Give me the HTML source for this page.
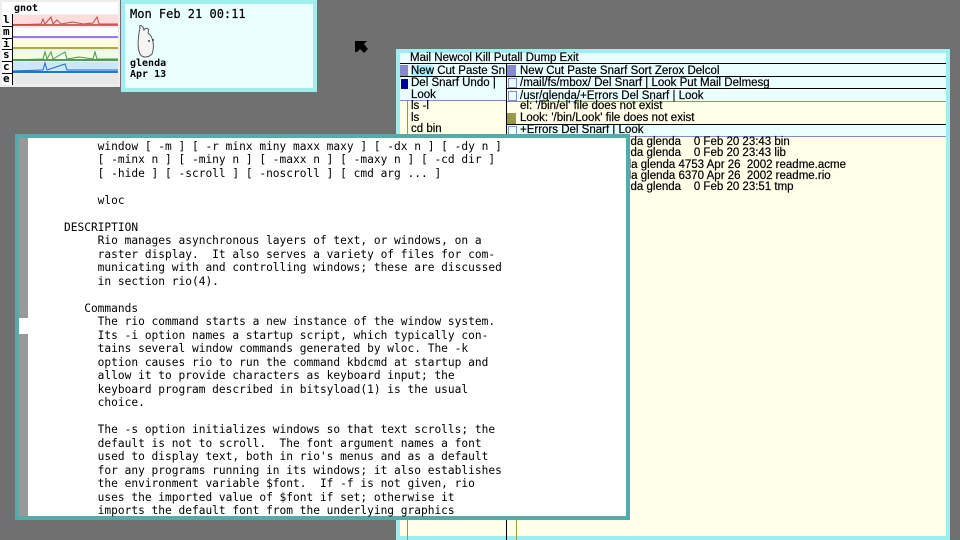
<!DOCTYPE html>
<html><head><style>
*{margin:0;padding:0;box-sizing:border-box}
body{width:960px;height:540px;background:#707070;position:relative;overflow:hidden;font-family:"Liberation Sans",sans-serif}
.a{position:absolute}
.m{font-family:"DejaVu Sans Mono","Liberation Mono",monospace}
.s{font-family:"Liberation Sans",sans-serif;font-size:11.5px;line-height:12px;white-space:pre;color:#000;-webkit-text-stroke:0.2px #000}
pre{font-family:"DejaVu Sans Mono","Liberation Mono",monospace;font-size:11.2px;line-height:13.48px;color:#000}
</style></head><body>

<!-- stats -->
<div class="a" style="left:0;top:0;width:120px;height:87px;background:#eeeeee"></div>
<div class="a" style="left:2px;top:2px;width:116px;height:12px;background:#fff"></div>
<div class="a m" style="left:14px;top:3px;font-size:10px;font-weight:bold">gnot</div>
<div class="a" style="left:2px;top:14px;width:11px;height:71px;background:#fff;border-right:1px solid #000"></div>
<div class="a m" style="left:3px;top:14px;font-size:11px;line-height:11.8px;font-weight:bold;white-space:pre">l
m
i
s
c
e</div>
<div class="a" style="left:2px;top:26px;width:11px;height:1px;background:#000"></div>
<div class="a" style="left:2px;top:38px;width:11px;height:1px;background:#000"></div>
<div class="a" style="left:2px;top:49px;width:11px;height:1px;background:#000"></div>
<div class="a" style="left:2px;top:61px;width:11px;height:1px;background:#000"></div>
<div class="a" style="left:2px;top:73px;width:11px;height:1px;background:#000"></div>
<div class="a" style="left:13px;top:15px;width:105px;height:11px;background:#ffdddd;border-bottom:2px solid #cc6666"></div>
<div class="a" style="left:13px;top:28px;width:105px;height:10px;background:#fff;border-bottom:2px solid #9a7ae6"></div>
<div class="a" style="left:13px;top:39px;width:105px;height:10px;background:#ffffdd;border-bottom:2px solid #aaaa55"></div>
<div class="a" style="left:13px;top:51px;width:105px;height:10px;background:#eeffe6;border-bottom:2px solid #55995a"></div>
<div class="a" style="left:13px;top:62px;width:105px;height:11px;background:#cce8f8;border-bottom:2px solid #2277cc"></div>
<div class="a" style="left:13px;top:74px;width:105px;height:10px;background:#e8e8e8"></div>
<svg class="a" style="left:13px;top:15px" width="105" height="60">
<polyline fill="none" stroke="#cc4444" points="0,10 28,9 30,4 32,9 38,2 40,9 44,5 48,9 60,7 70,9 80,8 84,2 86,9 105,9"/>
<polyline fill="none" stroke="#449944" points="0,45 30,44 32,37 34,44 38,37 40,44 52,37 54,44 66,42 80,44 82,37 84,44 105,44"/>
<polyline fill="none" stroke="#2266cc" points="0,56 30,55 32,48 34,55 52,49 54,55 105,55"/>
</svg>

<!-- clock window -->
<div class="a" style="left:121px;top:0;width:196px;height:92px;background:#eaffff;border:4px solid #9eeeee"></div>
<div class="a m" style="left:130px;top:7px;font-size:12px;-webkit-text-stroke:0.2px #000">Mon Feb 21 00:11</div>
<svg class="a" style="left:134px;top:24px" width="26" height="36"><path d="M6,4 C4,0 9,1 10,6 C12,3 16,4 14,9 C19,12 21,22 18,30 C14,34 8,34 6,30 C3,24 4,12 6,4Z" fill="#f4f4f4" stroke="#555" stroke-width="1"/><circle cx="15" cy="17" r="1" fill="#444"/><circle cx="19" cy="16" r="1" fill="#444"/></svg>
<div class="a m" style="left:130px;top:59px;font-size:10px;line-height:10.5px;font-weight:bold;white-space:pre">glenda
Apr 13</div>

<!-- cursor -->
<svg class="a" style="left:355px;top:41px" width="14" height="13"><path d="M0,0 L12,0 L9,3 L13,8 L9,12 L5,8 L2,11 L0,11Z" fill="#000"/></svg>

<!-- acme -->
<div class="a" style="left:396px;top:49px;width:554px;height:491px;background:#ffffea;border:4px solid #9eeeee"></div>
<div class="a" style="left:400px;top:53px;width:546px;height:11px;background:#eaffff;border-bottom:1px solid #000"></div>
<div class="a s" style="left:410px;top:52px">Mail Newcol Kill Putall Dump Exit</div>
<div class="a" style="left:400px;top:64px;width:546px;height:13px;background:#eaffff;border-bottom:1px solid #000"></div>
<div class="a" style="left:400px;top:65px;width:8px;height:11px;background:#8888cc"></div>
<div class="a" style="left:411px;top:65px;width:22px;height:11px;background:#aaeeff"></div>
<div class="a s" style="left:411px;top:65px">New Cut Paste Sn</div>
<div class="a" style="left:507px;top:65px;width:9px;height:11px;background:#8888cc"></div>
<div class="a s" style="left:520px;top:65px">New Cut Paste Snarf Sort Zerox Delcol</div>
<div class="a" style="left:400px;top:77px;width:106px;height:24px;background:#eaffff;border-bottom:1px solid #8888cc"></div>
<div class="a" style="left:401px;top:79px;width:7px;height:10px;background:#000099"></div>
<div class="a s" style="left:411px;top:77px">Del Snarf Undo |
Look</div>
<div class="a s" style="left:411px;top:101px;line-height:11.5px">ls -l
ls
cd bin</div>
<div class="a" style="left:407px;top:101px;width:1px;height:439px;background:#99994c"></div>
<div class="a" style="left:506px;top:64px;width:1px;height:476px;background:#000"></div>
<div class="a" style="left:507px;top:77px;width:439px;height:12px;background:#eaffff;border-bottom:1px solid #000"></div>
<div class="a" style="left:508px;top:78px;width:9px;height:10px;border:1px solid #8888cc;background:#eaffff"></div>
<div class="a s" style="left:520px;top:77px">/mail/fs/mbox/ Del Snarf | Look Put Mail Delmesg</div>
<div class="a" style="left:507px;top:90px;width:439px;height:12px;background:#eaffff;border-bottom:1px solid #8888cc"></div>
<div class="a" style="left:508px;top:91px;width:9px;height:10px;border:1px solid #8888cc;background:#eaffff"></div>
<div class="a s" style="left:520px;top:90px">/usr/glenda/+Errors Del Snarf | Look</div>
<div class="a" style="left:507px;top:113px;width:9px;height:11px;background:#99994c"></div>
<div class="a s" style="left:520px;top:101px;line-height:11.5px">el: '/bin/el' file does not exist
Look: '/bin/Look' file does not exist</div>
<div class="a" style="left:507px;top:124px;width:439px;height:13px;background:#eaffff;border-top:1px solid #000;border-bottom:1px solid #8888cc"></div>
<div class="a" style="left:508px;top:126px;width:9px;height:10px;border:1px solid #8888cc;background:#eaffff"></div>
<div class="a s" style="left:520px;top:124px">+Errors Del Snarf | Look</div>
<div class="a s" style="left:520px;top:137px;line-height:11.3px">--rwxrwxr-x M 20 glenda glenda    0 Feb 20 23:43 bin
--rwxrwxr-x M 20 glenda glenda    0 Feb 20 23:43 lib
--rw-rw-r-- M 20 glenda glenda 4753 Apr 26  2002 readme.acme
--rw-rw-r-- M 20 glenda glenda 6370 Apr 26  2002 readme.rio
--rwxrwxr-x M 20 glenda glenda    0 Feb 20 23:51 tmp</div>
<div class="a" style="left:516px;top:137px;width:1px;height:403px;background:#99994c"></div>

<!-- rio window -->
<div class="a" style="left:15px;top:134px;width:615px;height:386px;background:#fff;border:4px solid #55aaaa"></div>
<div class="a" style="left:19px;top:138px;width:9px;height:378px;background:#999"></div>
<div class="a" style="left:19px;top:318px;width:9px;height:16px;background:#fff"></div>
<pre class="a" style="left:64px;top:140px">     window [ -m ] [ -r minx miny maxx maxy ] [ -dx n ] [ -dy n ]
     [ -minx n ] [ -miny n ] [ -maxx n ] [ -maxy n ] [ -cd dir ]
     [ -hide ] [ -scroll ] [ -noscroll ] [ cmd arg ... ]

     wloc

DESCRIPTION
     Rio manages asynchronous layers of text, or windows, on a
     raster display.  It also serves a variety of files for com-
     municating with and controlling windows; these are discussed
     in section rio(4).

   Commands
     The rio command starts a new instance of the window system.
     Its -i option names a startup script, which typically con-
     tains several window commands generated by wloc. The -k
     option causes rio to run the command kbdcmd at startup and
     allow it to provide characters as keyboard input; the
     keyboard program described in bitsyload(1) is the usual
     choice.

     The -s option initializes windows so that text scrolls; the
     default is not to scroll.  The font argument names a font
     used to display text, both in rio's menus and as a default
     for any programs running in its windows; it also establishes
     the environment variable $font.  If -f is not given, rio
     uses the imported value of $font if set; otherwise it
     imports the default font from the underlying graphics</pre>
</body></html>
